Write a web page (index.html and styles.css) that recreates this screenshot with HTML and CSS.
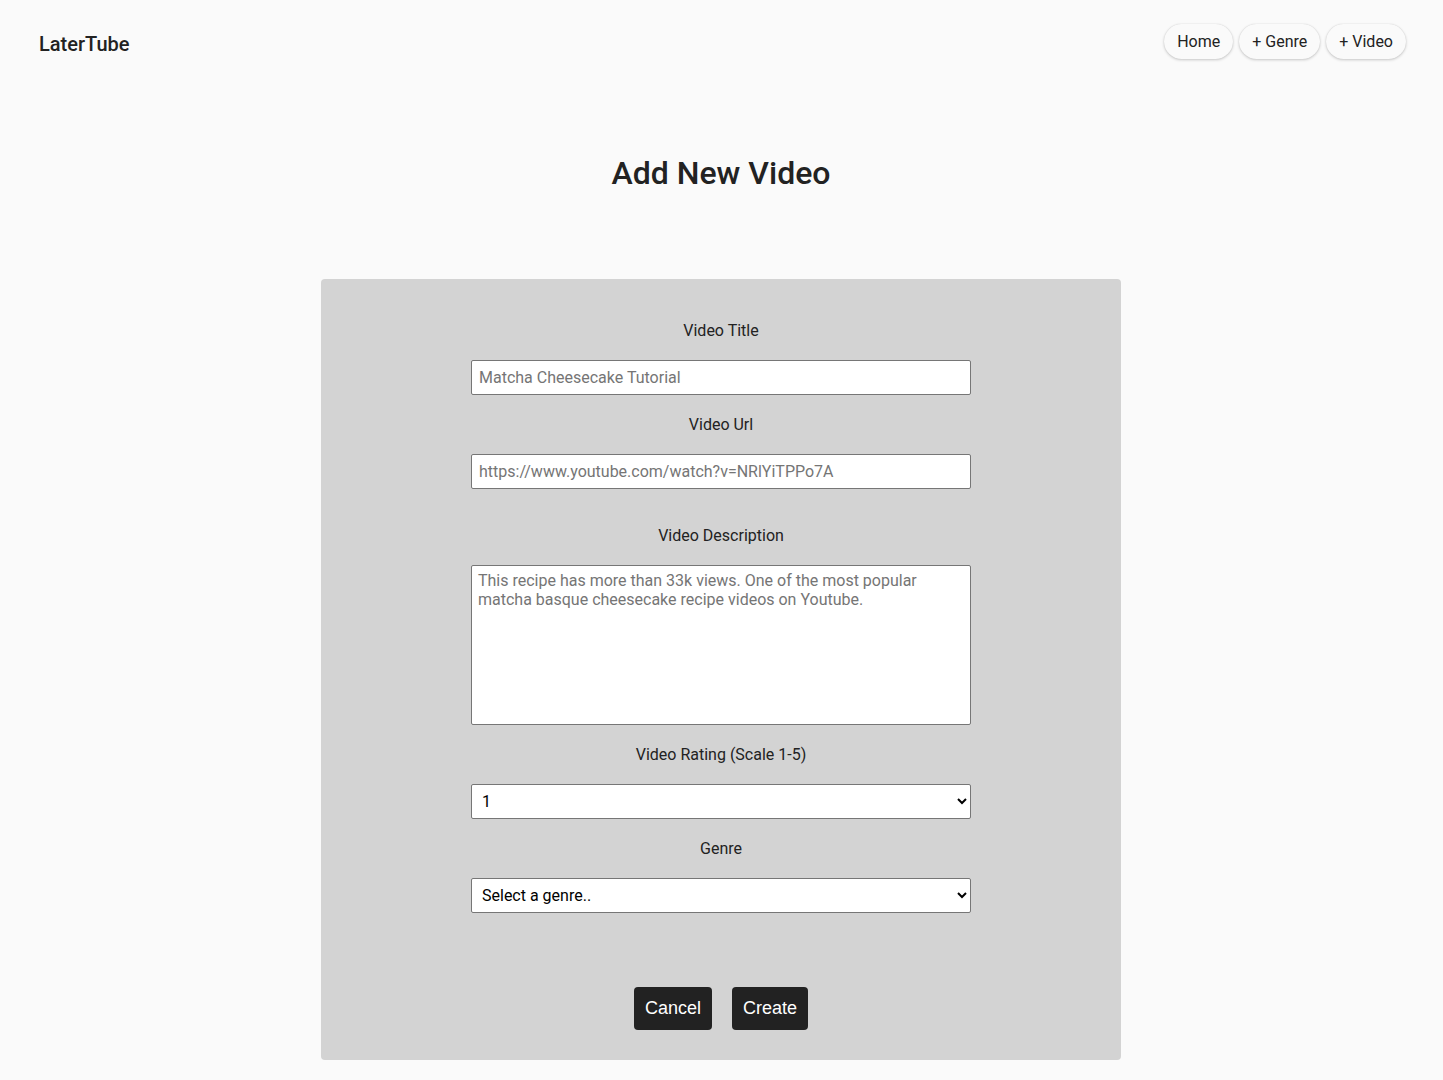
FILE: index.html
```html
<!DOCTYPE html>
<html lang="en">
<head>
<meta charset="utf-8">
<title>LaterTube</title>
<link rel="stylesheet" href="styles.css">
</head>
<body>
<header class="topbar">
  <div class="brand">LaterTube</div>
  <nav class="nav">
    <a class="pill" href="#">Home</a>
    <a class="pill" href="#">+ Genre</a>
    <a class="pill" href="#">+ Video</a>
  </nav>
</header>
<main class="main">
  <h1 class="title">Add New Video</h1>
  <form class="card">
    <div class="field">
      <label class="label" for="t">Video Title</label>
      <input class="control" id="t" type="text" placeholder="Matcha Cheesecake Tutorial">
    </div>
    <div class="field">
      <label class="label" for="u">Video Url</label>
      <input class="control" id="u" type="text" placeholder="https://www.youtube.com/watch?v=NRlYiTPPo7A">
    </div>
    <div class="field field-wide">
      <label class="label" for="d">Video Description</label>
      <textarea class="control area" id="d" placeholder="This recipe has more than 33k views. One of the most popular matcha basque cheesecake recipe videos on Youtube."></textarea>
    </div>
    <div class="field">
      <label class="label" for="r">Video Rating (Scale 1-5)</label>
      <select class="control select" id="r">
        <option>1</option><option>2</option><option>3</option><option>4</option><option>5</option>
      </select>
    </div>
    <div class="field">
      <label class="label" for="g">Genre</label>
      <select class="control select" id="g">
        <option>Select a genre..</option>
      </select>
    </div>
    <div class="actions">
      <button type="button" class="btn">Cancel</button>
      <button type="button" class="btn">Create</button>
    </div>
  </form>
</main>
</body>
</html>
```
FILE: styles.css
```css
* { box-sizing: border-box; }
html, body { margin: 0; padding: 0; }
body {
  background: #fafafa;
  color: #222;
  font-family: Roboto, "Liberation Sans", sans-serif;
  font-size: 16px;
}
.topbar {
  display: flex;
  justify-content: space-between;
  align-items: center;
  padding: 24px 37px 0 39px;
  height: 59px;
}
.brand {
  font-size: 20px;
  font-weight: 500;
  color: #222;
  margin-top: 5px;
}
.nav {
  display: flex;
  gap: 6px;
  align-self: flex-start;
}
.pill {
  display: inline-flex;
  align-items: center;
  height: 35px;
  padding: 0 13px;
  border-radius: 18px;
  background: #fafafa;
  color: #222;
  text-decoration: none;
  font-size: 16px;
  box-shadow: 0 1px 3px rgba(0,0,0,0.2), 0 0 1px rgba(0,0,0,0.15);
}
.main {
  display: flex;
  flex-direction: column;
  align-items: center;
  padding-right: 1px;
}
.title {
  margin: 94px 0 0;
  font-size: 32px;
  font-weight: 500;
  line-height: 40px;
  color: #222;
}
.card {
  margin-top: 86px;
  width: 800px;
  background: #d3d3d3;
  border-radius: 4px;
  padding: 42px 150px 30px;
  display: flex;
  flex-direction: column;
}
.field {
  display: flex;
  flex-direction: column;
  align-items: center;
  margin-bottom: 20px;
}
.field-wide { margin-top: 17px; }
.label {
  line-height: 19px;
  font-size: 16px;
  color: #222;
  margin-bottom: 20px;
}
.control {
  width: 500px;
  height: 35px;
  background: #fff;
  border: 1px solid #767676;
  border-radius: 2px;
  font-family: Roboto, "Liberation Sans", sans-serif;
  font-size: 16px;
  padding: 0 7px;
  color: #222;
}
.control::placeholder { color: #757575; }
.area {
  height: 160px;
  padding: 5px 6px;
  line-height: 19px;
  resize: none;
}
.select {
  padding: 0 6px;
  color: #000;
}
.actions {
  display: flex;
  justify-content: center;
  gap: 20px;
  margin-top: 54px;
}
.btn {
  height: 43px;
  padding: 0 11px;
  border: none;
  border-radius: 4px;
  background: #222;
  color: #fff;
  font-family: "Liberation Sans", Arial, sans-serif;
  font-size: 18px;
  cursor: pointer;
}
```
